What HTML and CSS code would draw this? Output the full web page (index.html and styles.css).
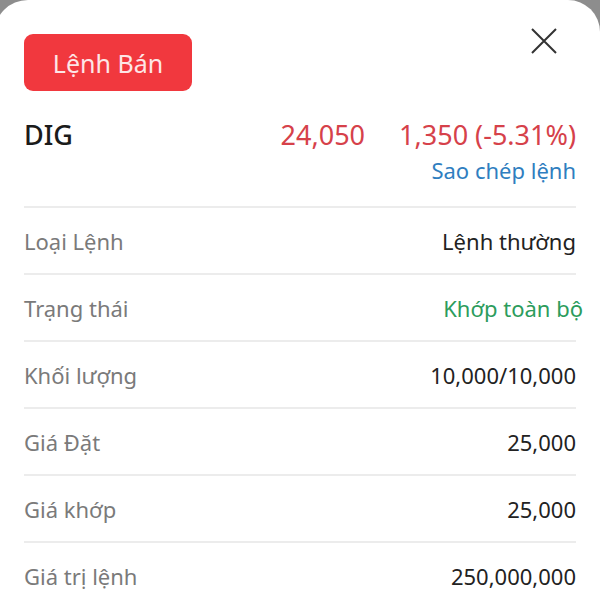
FILE: index.html
```html
<!DOCTYPE html>
<html>
<head>
	<title>Chi tiết lệnh</title>
	<meta charset="utf-8">
	<link rel="stylesheet" href="styles.css">
</head>
<body>
	<div class="sheet">
		<div class="sheet-head">
			<span class="side-badge">Lệnh Bán</span>
			<button class="close-btn" aria-label="Đóng">
				<svg width="26" height="26" viewBox="0 0 26 26">
					<path d="M1 1 L25 25 M25 1 L1 25" stroke="#333" stroke-width="2" fill="none"/>
				</svg>
			</button>
		</div>

		<div class="quote">
			<span class="symbol">DIG</span>
			<span class="price">24,050</span>
			<span class="change">1,350 (-5.31%)</span>
		</div>
		<div class="copy-row">
			<a class="copy-link" href="#">Sao chép lệnh</a>
		</div>

		<div class="details">
			<div class="row">
				<span class="label">Loại Lệnh</span>
				<span class="value">Lệnh thường</span>
			</div>
			<div class="row">
				<span class="label">Trạng thái</span>
				<span class="value matched">Khớp toàn bộ</span>
			</div>
			<div class="row">
				<span class="label">Khối lượng</span>
				<span class="value">10,000/10,000</span>
			</div>
			<div class="row">
				<span class="label">Giá Đặt</span>
				<span class="value">25,000</span>
			</div>
			<div class="row">
				<span class="label">Giá khớp</span>
				<span class="value">25,000</span>
			</div>
			<div class="row">
				<span class="label">Giá trị lệnh</span>
				<span class="value">250,000,000</span>
			</div>
		</div>
	</div>
</body>
</html>
```

FILE: styles.css
```css
*, *:before, *:after {
	box-sizing: border-box;
}

html, body {
	height: 100%;
}

body {
	margin: 0;
	background: #8d8d8d;
	font-family: 'Noto Sans', 'Open Sans', sans-serif;
	color: #222;
	overflow: hidden;
}

.sheet {
	margin-left: -6px;
	width: 606px;
	height: 100%;
	overflow: hidden;
	background: #fff;
	border-radius: 34px 32px 0 0;
	padding: 0 24px 0 30px;
}

.sheet-head {
	display: flex;
	justify-content: space-between;
	align-items: flex-start;
	padding-top: 34px;
}

.side-badge {
	display: flex;
	align-items: center;
	justify-content: center;
	width: 168px;
	height: 57px;
	background: #f1383e;
	color: #fde6e6;
	font-size: 25px;
	border-radius: 9px;
}

.close-btn {
	border: none;
	background: none;
	padding: 0;
	margin: -6px 19px 0 0;
	width: 26px;
	height: 26px;
}

.quote {
	display: flex;
	align-items: baseline;
	margin-top: 26px;
	font-size: 27px;
	line-height: 36px;
}

.symbol {
	flex: 1;
	font-weight: 500;
	color: #1b1b1b;
}

.price {
	color: #d6414a;
	margin-right: 34px;
}

.change {
	color: #d6414a;
}

.copy-row {
	display: flex;
	justify-content: flex-end;
	margin-top: 2px;
}

.copy-link {
	color: #2f7ec0;
	font-size: 22px;
	text-decoration: none;
}

.details {
	margin-top: 21px;
}

.row {
	display: flex;
	justify-content: space-between;
	align-items: center;
	height: 67px;
	border-top: 2px solid #ececec;
	font-size: 22px;
}

.label {
	color: #7a7a7a;
}

.value {
	color: #222;
}

.value.matched {
	color: #2c9c5c;
	margin-right: -7px;
}
```
